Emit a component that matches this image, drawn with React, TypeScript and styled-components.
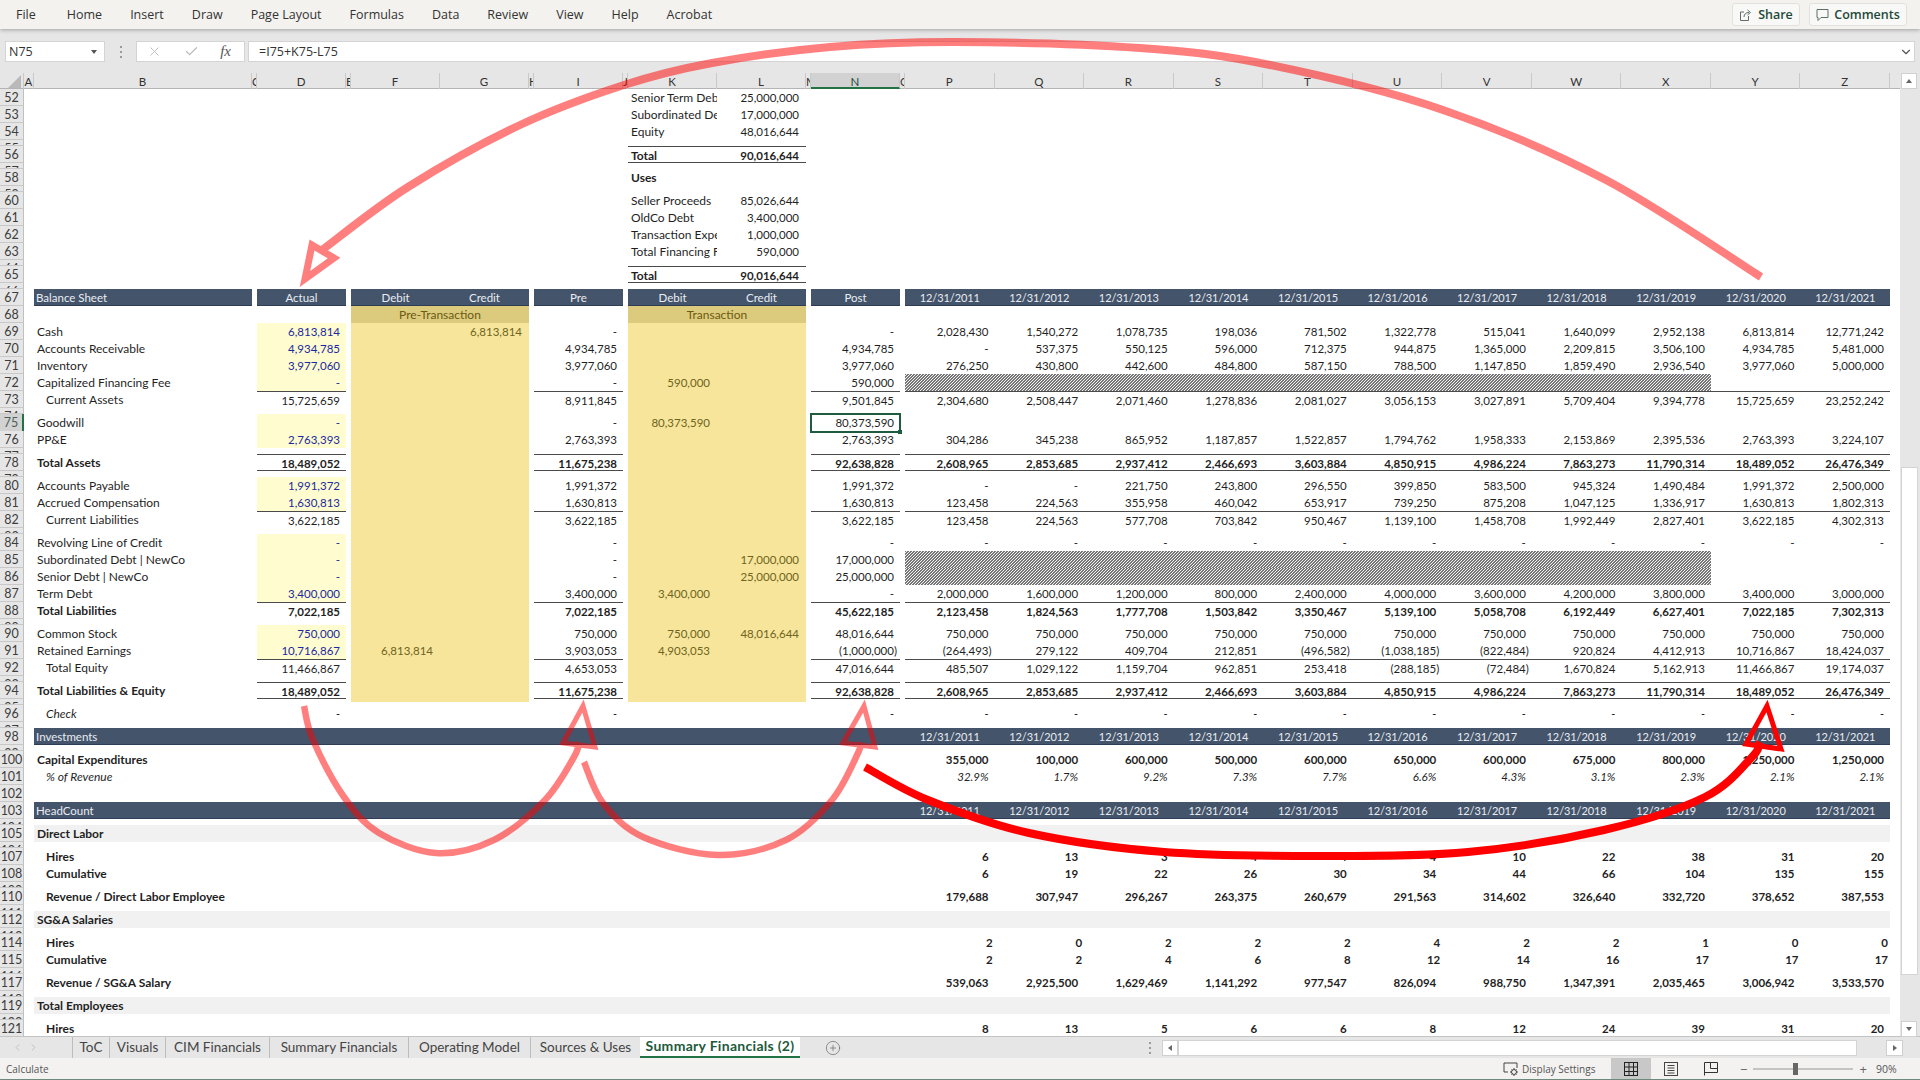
import React from "react";
import styled, { createGlobalStyle, css } from "styled-components";
import { X, Check, ChevronDown, CirclePlus, ChevronLeft, ChevronRight } from "lucide-react";

const Global = createGlobalStyle`
  html, body { margin: 0; padding: 0; background: #fff; overflow: hidden; }
  * { box-sizing: border-box; }
`;

const UI = `"Open Sans", "Liberation Sans", sans-serif`;
const SHEET = `Lato, "Liberation Sans", sans-serif`;
const TRACKS = `24px 10px 218px 5px 89px 5px 89px 89px 5px 89px 5px 89px 89px 5px 89px 5px repeat(11, 89.55px) 1fr`;

const Page = styled.div`
  position: relative;
  width: 1920px;
  height: 1080px;
  display: flex;
  flex-direction: column;
  overflow: hidden;
  font-family: ${SHEET};
  border-bottom: 1px solid #6d8a7c;
`;

/* ---------- menu ---------- */
const MenuBar = styled.div`
  position: relative;
  z-index: 2;
  height: 29px;
  flex: none;
  display: flex;
  align-items: center;
  padding: 0 13px 0 16px;
  background: #f3f2ef;
  box-shadow: 0 1px 4px rgba(0, 0, 0, 0.3);
  font: 12.5px ${UI};
  color: #333;
`;
const MenuItems = styled.div`
  display: flex;
  gap: 28px;
  & > :first-child {
    margin-right: 3px;
  }
`;
const MenuActions = styled.div`
  margin-left: auto;
  display: flex;
  gap: 9px;
`;
const ActionButton = styled.div<{ $w: number }>`
  width: ${(p) => p.$w}px;
  height: 23px;
  display: flex;
  align-items: center;
  justify-content: center;
  gap: 5px;
  background: #f8f8f6;
  border: 1px solid #e2e1dd;
  border-radius: 3px;
  font: 600 12.5px ${UI};
  color: #1f4a3a;
`;

/* ---------- formula ---------- */
const FormulaBar = styled.div`
  height: 44px;
  flex: none;
  display: flex;
  align-items: flex-start;
  padding: 12px 5px 0 5px;
  background: #e6e6e6;
`;
const NameBox = styled.div`
  width: 100px;
  height: 21px;
  display: flex;
  align-items: center;
  justify-content: space-between;
  padding: 0 7px 0 3px;
  background: #fff;
  border: 1px solid #d4d4d4;
  font: 12.5px ${UI};
  color: #333;
`;
const Caret = styled.span`
  width: 0;
  height: 0;
  border-left: 3.5px solid transparent;
  border-right: 3.5px solid transparent;
  border-top: 4px solid #555;
`;
const Grip = styled.div`
  width: 31px;
  height: 21px;
  display: flex;
  flex-direction: column;
  align-items: center;
  justify-content: center;
  gap: 3px;
  & > i {
    width: 2px;
    height: 2px;
    background: #9a9a9a;
  }
`;
const FormulaTools = styled.div`
  width: 109px;
  height: 21px;
  display: flex;
  align-items: center;
  justify-content: space-between;
  padding: 0 13px 0 10px;
  background: #fff;
  border: 1px solid #d4d4d4;
  color: #bbb;
`;
const Fx = styled.span`
  font: italic 15px "Liberation Serif", serif;
  color: #555;
`;
const FormulaInput = styled.div`
  flex: 1;
  height: 21px;
  margin-left: 3px;
  display: flex;
  align-items: center;
  justify-content: space-between;
  padding: 0 1px 0 10px;
  background: #fff;
  border: 1px solid #d4d4d4;
  font: 12.5px ${UI};
  color: #333;
`;

/* ---------- grid ---------- */
const ColumnHeader = styled.div`
  height: 16px;
  flex: none;
  display: grid;
  grid-template-columns: ${TRACKS};
  background: #e6e6e6;
  border-bottom: 1px solid #b4b4b4;
`;
const Corner = styled.div`
  position: relative;
  border-right: 1px solid #c8c8c8;
  &::after {
    content: "";
    position: absolute;
    right: 2px;
    bottom: 1px;
    width: 13px;
    height: 13px;
    background: #b9b9b9;
    clip-path: polygon(100% 0, 100% 100%, 0 100%);
  }
`;
const ColLetter = styled.div<{ $col: number; $active?: boolean }>`
  grid-column: ${(p) => p.$col};
  overflow: hidden;
  text-align: center;
  font-size: 11.5px;
  line-height: 17px;
  color: #333;
  border-right: 1px solid #c9c9c9;
  ${(p) =>
    p.$active &&
    css`
      background: #d2d2d2;
      color: #1d4d39;
      border-bottom: 2px solid #217346;
      height: 16px;
    `}
`;
const Middle = styled.div`
  flex: 1;
  min-height: 0;
  display: flex;
`;
const Rows = styled.div`
  flex: 1;
  min-width: 0;
  overflow: hidden;
  background: #fff;
`;
const SheetRow = styled.div<{ $thin?: boolean }>`
  display: grid;
  grid-template-columns: ${TRACKS};
  height: ${(p) => (p.$thin ? 6 : 17)}px;
  overflow: ${(p) => (p.$thin ? "hidden" : "visible")};
  font-size: 11.5px;
  line-height: 18px;
  color: #1f1f1f;
`;
const RowNum = styled.div<{ $active?: boolean }>`
  grid-column: 1;
  grid-row: 1;
  overflow: hidden;
  text-align: center;
  font-size: 12.5px;
  line-height: 18px;
  color: #3c3c3c;
  background: #e6e6e6;
  border-bottom: 1px solid #c8c8c8;
  border-right: 1px solid #c0c0c0;
  ${(p) =>
    p.$active &&
    css`
      background: #d2d2d2;
      color: #4d5f57;
      border-right: 2px solid #217346;
    `}
`;

const fills: Record<string, string> = {
  navy: "#44546a",
  input: "#fffccf",
  adj: "#f6e59b",
  adjHead: "#dccb7d",
  band: "#f1f1f1",
};
const tones: Record<string, string> = {
  blue: "#1a2aa0",
  olive: "#6f6420",
  white: "#e9edf3",
  dark: "#6b5a10",
};

const Cell = styled.div<{
  $col: number;
  $span?: number;
  $fill?: string;
  $tone?: string;
  $bold?: boolean;
  $italic?: boolean;
  $align?: string;
  $indent?: number;
  $pad?: number;
  $top?: boolean;
  $bottom?: boolean;
  $selected?: boolean;
  $peek?: boolean;
  $date?: boolean;
}>`
  grid-column: ${(p) => p.$col} / span ${(p) => p.$span ?? 1};
  grid-row: 1;
  position: relative;
  min-width: 0;
  overflow: ${(p) => (p.$selected ? "visible" : "hidden")};
  white-space: nowrap;
  text-align: ${(p) => p.$align ?? "right"};
  padding-left: ${(p) => p.$indent ?? 0}px;
  padding-right: ${(p) => p.$pad ?? 0}px;
  background: ${(p) => (p.$fill ? fills[p.$fill] : "transparent")};
  color: ${(p) => (p.$tone ? tones[p.$tone] : "inherit")};
  font-weight: ${(p) => (p.$bold ? 700 : 400)};
  font-style: ${(p) => (p.$italic ? "italic" : "normal")};
  ${(p) => p.$align && p.$fill !== "navy" && "font-size: 12px;"}
  ${(p) => p.$date && "font-size: 11px; letter-spacing: -0.1px;"}
  ${(p) => p.$peek && "height: 3px;"}
  ${(p) => p.$top && "border-top: 1px solid #4a4a4a; line-height: 17px;"}
  ${(p) => p.$bottom && "border-bottom: 1px solid #4a4a4a;"}
  ${(p) => p.$fill === "navy" && "border-bottom: 1px solid #2e3d55;"}
  ${(p) =>
    p.$selected &&
    css`
      z-index: 1;
      outline: 2px solid #1f5c3f;
      outline-offset: -1px;
      &::after {
        content: "";
        position: absolute;
        right: -2px;
        bottom: -2px;
        width: 4px;
        height: 4px;
        background: #1f5c3f;
      }
    `}
`;
const Hatch = styled.div<{ $col: number; $span: number }>`
  grid-column: ${(p) => p.$col} / span ${(p) => p.$span};
  grid-row: 1;
  background: repeating-linear-gradient(135deg, #777 0 0.85px, #f2f2f2 0.85px 2.1213px);
`;

/* ---------- scrollbars ---------- */
const VScroll = styled.div`
  width: 20px;
  flex: none;
  margin-top: -16px;
  position: relative;
  z-index: 1;
  display: flex;
  flex-direction: column;
  padding-right: 2px;
  background: #e6e6e6;
`;
const ScrollButton = styled.div<{ $size?: number }>`
  flex: none;
  height: 16px;
  width: ${(p) => p.$size ?? 16}px;
  margin-left: 1px;
  display: flex;
  align-items: center;
  justify-content: center;
  background: #fff;
  border: 1px solid #d0d0d0;
`;
const Arrow = styled.span<{ $dir: "up" | "down" | "left" | "right" }>`
  width: 0;
  height: 0;
  ${(p) =>
    p.$dir === "up" || p.$dir === "down"
      ? `border-left: 3.5px solid transparent; border-right: 3.5px solid transparent;
         border-${p.$dir === "up" ? "bottom" : "top"}: 4px solid #666;`
      : `border-top: 3.5px solid transparent; border-bottom: 3.5px solid transparent;
         border-${p.$dir === "left" ? "right" : "left"}: 4px solid #666;`}
`;
const VTrack = styled.div<{ $h: number }>`
  height: ${(p) => p.$h}px;
  flex: none;
`;
const VThumb = styled.div<{ $h: number }>`
  height: ${(p) => p.$h}px;
  flex: none;
  margin-left: 1px;
  background: #fff;
  border: 1px solid #d4d4d4;
`;

/* ---------- tabs ---------- */
const TabBar = styled.div`
  height: 22px;
  flex: none;
  display: flex;
  align-items: stretch;
  background: #e6e6e6;
  border-top: 1px solid #c4c4c4;
  font: 13.5px ${SHEET};
  color: #444;
`;
const TabNav = styled.div`
  width: 72px;
  display: flex;
  align-items: center;
  gap: 5px;
  padding-left: 12px;
  color: #bdbdbd;
`;
const Tab = styled.div<{ $w: number; $active?: boolean }>`
  width: ${(p) => p.$w}px;
  display: flex;
  align-items: center;
  justify-content: center;
  padding-bottom: 2px;
  white-space: nowrap;
  border-left: 1px solid #bdbdbd;
  ${(p) =>
    p.$active &&
    css`
      background: #fff;
      color: #1d5a3c;
      font-size: 14px;
      font-weight: 700;
      letter-spacing: 0.3px;
      border-bottom: 2px solid #217346;
      border-left: none;
    `}
`;
const AddTab = styled.div`
  margin-left: 25px;
  display: flex;
  align-items: center;
  color: #777;
`;
const HScroll = styled.div`
  margin-left: auto;
  width: 776px;
  padding-right: 17px;
  display: flex;
  align-items: center;
`;
const HDots = styled.div`
  width: 12px;
  margin-right: 5px;
  display: flex;
  flex-direction: column;
  align-items: center;
  gap: 3px;
  & > i {
    width: 2px;
    height: 2px;
    background: #9a9a9a;
  }
`;
const HThumb = styled.div`
  width: 679px;
  height: 16px;
  background: #fff;
  border: 1px solid #d4d4d4;
`;
const HTrack = styled.div`
  width: 28px;
`;

/* ---------- status ---------- */
const StatusBar = styled.div`
  height: 21px;
  flex: none;
  display: flex;
  align-items: stretch;
  padding-left: 6px;
  background: #f3f2f0;
  font: 10px ${UI};
  color: #555;
`;
const StatusText = styled.div`
  display: flex;
  align-items: center;
`;
const StatusRight = styled.div`
  margin-left: auto;
  display: flex;
  align-items: stretch;
`;
const DisplaySettings = styled.div`
  width: 108px;
  display: flex;
  align-items: center;
  gap: 2px;
`;
const ViewButton = styled.div<{ $active?: boolean }>`
  width: 40px;
  display: flex;
  align-items: center;
  justify-content: center;
  background: ${(p) => (p.$active ? "#c8c8c8" : "transparent")};
`;
const ZoomSlider = styled.div`
  width: 145px;
  padding-left: 9px;
  display: flex;
  align-items: center;
  gap: 6px;
  color: #666;
  font-size: 13px;
`;
const SliderTrack = styled.div`
  position: relative;
  width: 100px;
  height: 2px;
  background: #c4c4c4;
`;
const SliderKnob = styled.div`
  position: absolute;
  left: 40px;
  top: -5px;
  width: 5px;
  height: 12px;
  background: #666;
`;
const ZoomPct = styled.div`
  width: 44px;
  font-size: 10.5px;
  display: flex;
  align-items: center;
`;

const Overlay = styled.svg`
  position: absolute;
  left: 0;
  top: 0;
  z-index: 5;
  pointer-events: none;
`;

/* ---------- data ---------- */
type Spec = React.ComponentProps<typeof Cell> & { text?: string };
type RowSpec = { n: number; thin?: boolean; cells: Spec[]; hatch?: boolean };

const P0 = 17;
const dates = Array.from({ length: 11 }, (_, i) => `12/31/${2011 + i}`);

const list = (s: string) => s.trim().split(/\s+/);

type LineOpts = {
  D?: string;
  F?: string;
  G?: string;
  I?: string;
  K?: string;
  L?: string;
  N?: string;
  P?: string;
  input?: boolean;
  selectN?: boolean;
  hatch?: boolean;
  top?: boolean;
  bottom?: boolean;
  bold?: boolean;
  indent?: boolean;
  italic?: boolean;
  pad?: number;
};

const pad = (text?: string, base = 6) => (text && text.endsWith(")") ? 3 : base);

function line(n: number, label: string, o: LineOpts): RowSpec {
  const base = { $bold: o.bold, $italic: o.italic };
  const num = (col: number, text?: string, extra: Partial<Spec> = {}): Spec => ({
    $col: col,
    text,
    $pad: pad(text, o.pad ?? 6),
    $top: o.top,
    $bottom: o.bottom,
    ...base,
    ...extra,
  });
  const cells: Spec[] = [{ $col: 3, text: label, $align: "left", $indent: o.indent ? 12 : 3, ...base }];
  if (n >= 69 && n <= 94) {
    cells.push(
      { $col: 7, text: o.F, $fill: "adj", $tone: "olive", $pad: 7 },
      { $col: 8, text: o.G, $fill: "adj", $tone: "olive", $pad: 7 },
      { $col: 12, text: o.K, $fill: "adj", $tone: "olive", $pad: 7 },
      { $col: 13, text: o.L, $fill: "adj", $tone: "olive", $pad: 7 }
    );
  }
  if (o.D !== undefined) cells.push(num(5, o.D, o.input ? { $fill: "input", $tone: "blue" } : {}));
  if (o.I !== undefined) cells.push(num(10, o.I));
  if (o.N !== undefined) cells.push(num(15, o.N, { $selected: o.selectN }));
  if (o.P) list(o.P).forEach((v, i) => cells.push(num(P0 + i, v)));
  return { n, cells, hatch: o.hatch };
}

const thin = (n: number, adj = false): RowSpec => ({
  n,
  thin: true,
  cells: adj
    ? [
        { $col: 7, $span: 2, $fill: "adj" },
        { $col: 12, $span: 2, $fill: "adj" },
      ]
    : [],
});

const blank = (n: number): RowSpec => ({ n, cells: [] });

const su = (n: number, label: string, value: string, bold = false, lines = false): RowSpec => ({
  n,
  cells: [
    { $col: 12, text: label, $align: "left", $indent: 3, $bold: bold, $top: lines, $bottom: lines },
    { $col: 13, text: value, $pad: 7, $bold: bold, $top: lines, $bottom: lines },
  ],
});

const navyBand = (n: number, label: string): RowSpec => ({
  n,
  cells: [
    { $col: 3, $span: 14, text: label, $fill: "navy", $tone: "white", $align: "left", $indent: 2 },
    ...dates.map((d, i) => ({ $col: P0 + i, text: d, $fill: "navy", $tone: "white", $align: "center", $date: true })),
  ],
});
const greyBand = (n: number, label: string): RowSpec => ({
  n,
  cells: [{ $col: 3, $span: 25, text: label, $fill: "band", $align: "left", $indent: 3, $bold: true }],
});

const head = (col: number, text: string, align = "center"): Spec => ({
  $col: col,
  text,
  $fill: "navy",
  $tone: "white",
  $align: align,
  $indent: align === "left" ? 2 : 0,
});

const rows: RowSpec[] = [
  su(52, "Senior Term Debt", "25,000,000"),
  su(53, "Subordinated Debt", "17,000,000"),
  su(54, "Equity", "48,016,644"),
  thin(55),
  su(56, "Total", "90,016,644", true, true),
  thin(57),
  { n: 58, cells: [{ $col: 12, text: "Uses", $align: "left", $indent: 3, $bold: true }] },
  thin(59),
  su(60, "Seller Proceeds", "85,026,644"),
  su(61, "OldCo Debt", "3,400,000"),
  su(62, "Transaction Expenses", "1,000,000"),
  su(63, "Total Financing Fee", "590,000"),
  thin(64),
  su(65, "Total", "90,016,644", true, true),
  thin(66),
  {
    n: 67,
    cells: [
      head(3, "Balance Sheet", "left"),
      head(5, "Actual"),
      head(7, "Debit"),
      head(8, "Credit"),
      head(10, "Pre"),
      head(12, "Debit"),
      head(13, "Credit"),
      head(15, "Post"),
      ...dates.map((d, i) => ({ ...head(P0 + i, d), $date: true })),
    ],
  },
  {
    n: 68,
    cells: [
      { $col: 7, $span: 2, text: "Pre-Transaction", $fill: "adjHead", $tone: "dark", $align: "center" },
      { $col: 12, $span: 2, text: "Transaction", $fill: "adjHead", $tone: "dark", $align: "center" },
    ],
  },
  line(69, "Cash", { input: true, D: "6,813,814", G: "6,813,814", I: "-", N: "-", P: "2,028,430 1,540,272 1,078,735 198,036 781,502 1,322,778 515,041 1,640,099 2,952,138 6,813,814 12,771,242" }),
  line(70, "Accounts Receivable", { input: true, D: "4,934,785", I: "4,934,785", N: "4,934,785", P: "- 537,375 550,125 596,000 712,375 944,875 1,365,000 2,209,815 3,506,100 4,934,785 5,481,000" }),
  line(71, "Inventory", { input: true, D: "3,977,060", I: "3,977,060", N: "3,977,060", P: "276,250 430,800 442,600 484,800 587,150 788,500 1,147,850 1,859,490 2,936,540 3,977,060 5,000,000" }),
  line(72, "Capitalized Financing Fee", { input: true, D: "-", I: "-", K: "590,000", N: "590,000", hatch: true }),
  line(73, "Current Assets", { indent: true, top: true, D: "15,725,659", I: "8,911,845", N: "9,501,845", P: "2,304,680 2,508,447 2,071,460 1,278,836 2,081,027 3,056,153 3,027,891 5,709,404 9,394,778 15,725,659 23,252,242" }),
  thin(74, true),
  line(75, "Goodwill", { input: true, D: "-", I: "-", K: "80,373,590", N: "80,373,590", selectN: true }),
  line(76, "PP&E", { input: true, D: "2,763,393", I: "2,763,393", N: "2,763,393", P: "304,286 345,238 865,952 1,187,857 1,522,857 1,794,762 1,958,333 2,153,869 2,395,536 2,763,393 3,224,107" }),
  thin(77, true),
  line(78, "Total Assets", { bold: true, top: true, bottom: true, D: "18,489,052", I: "11,675,238", N: "92,638,828", P: "2,608,965 2,853,685 2,937,412 2,466,693 3,603,884 4,850,915 4,986,224 7,863,273 11,790,314 18,489,052 26,476,349" }),
  thin(79, true),
  line(80, "Accounts Payable", { input: true, D: "1,991,372", I: "1,991,372", N: "1,991,372", P: "- - 221,750 243,800 296,550 399,850 583,500 945,324 1,490,484 1,991,372 2,500,000" }),
  line(81, "Accrued Compensation", { input: true, D: "1,630,813", I: "1,630,813", N: "1,630,813", P: "123,458 224,563 355,958 460,042 653,917 739,250 875,208 1,047,125 1,336,917 1,630,813 1,802,313" }),
  line(82, "Current Liabilities", { indent: true, top: true, D: "3,622,185", I: "3,622,185", N: "3,622,185", P: "123,458 224,563 577,708 703,842 950,467 1,139,100 1,458,708 1,992,449 2,827,401 3,622,185 4,302,313" }),
  thin(83, true),
  line(84, "Revolving Line of Credit", { input: true, D: "-", I: "-", N: "-", P: "- - - - - - - - - - -" }),
  line(85, "Subordinated Debt | NewCo", { input: true, D: "-", I: "-", L: "17,000,000", N: "17,000,000", hatch: true }),
  line(86, "Senior Debt | NewCo", { input: true, D: "-", I: "-", L: "25,000,000", N: "25,000,000", hatch: true }),
  line(87, "Term Debt", { input: true, D: "3,400,000", I: "3,400,000", K: "3,400,000", N: "-", P: "2,000,000 1,600,000 1,200,000 800,000 2,400,000 4,000,000 3,600,000 4,200,000 3,800,000 3,400,000 3,000,000" }),
  line(88, "Total Liabilities", { bold: true, top: true, D: "7,022,185", I: "7,022,185", N: "45,622,185", P: "2,123,458 1,824,563 1,777,708 1,503,842 3,350,467 5,139,100 5,058,708 6,192,449 6,627,401 7,022,185 7,302,313" }),
  thin(89, true),
  line(90, "Common Stock", { input: true, D: "750,000", I: "750,000", K: "750,000", L: "48,016,644", N: "48,016,644", P: "750,000 750,000 750,000 750,000 750,000 750,000 750,000 750,000 750,000 750,000 750,000" }),
  line(91, "Retained Earnings", { input: true, D: "10,716,867", F: "6,813,814", I: "3,903,053", K: "4,903,053", N: "(1,000,000)", P: "(264,493) 279,122 409,704 212,851 (496,582) (1,038,185) (822,484) 920,824 4,412,913 10,716,867 18,424,037" }),
  line(92, "Total Equity", { indent: true, top: true, D: "11,466,867", I: "4,653,053", N: "47,016,644", P: "485,507 1,029,122 1,159,704 962,851 253,418 (288,185) (72,484) 1,670,824 5,162,913 11,466,867 19,174,037" }),
  thin(93, true),
  line(94, "Total Liabilities & Equity", { bold: true, top: true, bottom: true, D: "18,489,052", I: "11,675,238", N: "92,638,828", P: "2,608,965 2,853,685 2,937,412 2,466,693 3,603,884 4,850,915 4,986,224 7,863,273 11,790,314 18,489,052 26,476,349" }),
  {
    n: 95,
    thin: true,
    cells: [
      { $col: 7, $span: 2, $fill: "adj", $peek: true },
      { $col: 12, $span: 2, $fill: "adj", $peek: true },
    ],
  },
  line(96, "Check", { italic: true, indent: true, D: "-", I: "-", N: "-", P: "- - - - - - - - - - -" }),
  thin(97),
  navyBand(98, "Investments"),
  thin(99),
  line(100, "Capital Expenditures", { bold: true, P: "355,000 100,000 600,000 500,000 600,000 650,000 600,000 675,000 800,000 1,250,000 1,250,000" }),
  line(101, "% of Revenue", { italic: true, indent: true, P: "32.9% 1.7% 9.2% 7.3% 7.7% 6.6% 4.3% 3.1% 2.3% 2.1% 2.1%" }),
  blank(102),
  navyBand(103, "HeadCount"),
  thin(104),
  greyBand(105, "Direct Labor"),
  thin(106),
  line(107, "Hires", { bold: true, indent: true, P: "6 13 3 4 4 4 10 22 38 31 20" }),
  line(108, "Cumulative", { bold: true, indent: true, P: "6 19 22 26 30 34 44 66 104 135 155" }),
  thin(109),
  line(110, "Revenue / Direct Labor Employee", { bold: true, indent: true, P: "179,688 307,947 296,267 263,375 260,679 291,563 314,602 326,640 332,720 378,652 387,553" }),
  thin(111),
  greyBand(112, "SG&A Salaries"),
  thin(113),
  line(114, "Hires", { bold: true, indent: true, pad: 2, P: "2 0 2 2 2 4 2 2 1 0 0" }),
  line(115, "Cumulative", { bold: true, indent: true, pad: 2, P: "2 2 4 6 8 12 14 16 17 17 17" }),
  thin(116),
  line(117, "Revenue / SG&A Salary", { bold: true, indent: true, P: "539,063 2,925,500 1,629,469 1,141,292 977,547 826,094 988,750 1,347,391 2,035,465 3,006,942 3,533,570" }),
  thin(118),
  greyBand(119, "Total Employees"),
  thin(120),
  line(121, "Hires", { bold: true, indent: true, P: "8 13 5 6 6 8 12 24 39 31 20" }),
];

const hatchSpan = 9;

const letters = "A B C D E F G H I J K L M N O P Q R S T U V W X Y Z".split(" ");

const tabs: [string, number, boolean?][] = [
  ["ToC", 37],
  ["Visuals", 56],
  ["CIM Financials", 104],
  ["Summary Financials", 139],
  ["Operating Model", 122],
  ["Sources & Uses", 110],
  ["Summary Financials (2)", 160, true],
];

/* ---------- arrows ---------- */
type Pt = [number, number];
function smooth(pts: Pt[]): string {
  let d = `M${pts[0][0]} ${pts[0][1]}`;
  for (let i = 0; i < pts.length - 1; i++) {
    const p0 = pts[Math.max(0, i - 1)];
    const p1 = pts[i];
    const p2 = pts[i + 1];
    const p3 = pts[Math.min(pts.length - 1, i + 2)];
    const c1 = [p1[0] + (p2[0] - p0[0]) / 6, p1[1] + (p2[1] - p0[1]) / 6];
    const c2 = [p2[0] - (p3[0] - p1[0]) / 6, p2[1] - (p3[1] - p1[1]) / 6];
    d += ` C${c1[0].toFixed(1)} ${c1[1].toFixed(1)} ${c2[0].toFixed(1)} ${c2[1].toFixed(1)} ${p2[0]} ${p2[1]}`;
  }
  return d;
}
const tri = (p: Pt[]) => p.map((q) => q.join(",")).join(" ");

const arcTop: Pt[] = [[1761, 277], [1606, 180], [1443, 110], [1270, 65], [1140, 48], [957, 42], [830, 47], [712, 63], [624, 85], [520, 125], [408, 187], [322, 250]];
const arcA: Pt[] = [[304, 706], [313, 740], [344, 797], [379, 833], [436, 853], [494, 840], [545, 800], [574, 757], [579, 742]];
const arcB: Pt[] = [[584, 762], [603, 803], [643, 837], [718, 855], [786, 840], [832, 800], [858, 753], [860, 742]];
const arcC: Pt[] = [[865, 767], [928, 800], [1029, 833], [1164, 852], [1320, 856], [1468, 852], [1604, 830], [1705, 797], [1752, 757], [1760, 742]];

function Arrows() {
  return (
    <Overlay width={1920} height={1080} viewBox="0 0 1920 1080" fill="none">
      <g opacity={0.5} stroke="#ff0000">
        <path d={smooth(arcTop)} strokeWidth={8} />
        <polygon points={tri([[305, 279], [312, 245], [334, 258]])} strokeWidth={7} />
      </g>
      <g opacity={0.5} stroke="#ff0000">
        <path d={smooth(arcA)} strokeWidth={6.5} />
        <polygon points={tri([[583, 706], [563, 743], [595, 747]])} strokeWidth={5} />
      </g>
      <g opacity={0.5} stroke="#ff0000">
        <path d={smooth(arcB)} strokeWidth={6.5} />
        <polygon points={tri([[864, 706], [843, 743], [875, 747]])} strokeWidth={5} />
      </g>
      <g stroke="#ff0000">
        <path d={smooth(arcC)} strokeWidth={8} />
        <polygon points={tri([[1767, 706], [1746, 744], [1781, 749]])} strokeWidth={5} />
      </g>
    </Overlay>
  );
}

const ShareIcon = () => (
  <svg width="14" height="14" viewBox="0 0 14 14" fill="none" stroke="#5f6f68" strokeWidth="1">
    <path d="M5 4H1.5v8.5h8V8" />
    <path d="M5 9c0-3 2-4.5 5-4.5M8.5 2l3 2.5-3 2.5" />
  </svg>
);
const CommentIcon = () => (
  <svg width="13" height="14" viewBox="0 0 13 14" fill="none" stroke="#5f6f68" strokeWidth="1">
    <path d="M1 1.5h11v8H5l-3 3v-3H1z" />
  </svg>
);
const DisplayIcon = () => (
  <svg width="17" height="16" viewBox="0 0 17 16" fill="none" stroke="#444" strokeWidth="1">
    <path d="M5 11H1V2h13v5" />
    <circle cx="11" cy="11" r="2.5" />
    <path d="M11 7v1.500M11 13.500V15M7 11h1.500M13.500 11H15M8.500 8.500l1 1M12.500 12.500l1 1M13.500 8.500l-1 1M9.500 12.500l-1 1" />
  </svg>
);
const GridIcon = () => (
  <svg width="14" height="14" viewBox="0 0 14 14" fill="none" stroke="#222" strokeWidth="1">
    <rect x="0.5" y="0.5" width="13" height="13" />
    <path d="M5 .5v13M9.500 .5v13M.5 5h13M.5 9.500h13" />
  </svg>
);
const LayoutIcon = () => (
  <svg width="14" height="14" viewBox="0 0 14 14" fill="none" stroke="#444" strokeWidth="1">
    <rect x="0.5" y="0.5" width="13" height="13" />
    <path d="M3.500 3.500h7M3.500 6h7M3.500 8.500h7M3.500 11h7" />
  </svg>
);
const BreakIcon = () => (
  <svg width="14" height="14" viewBox="0 0 14 14" fill="none" stroke="#333" strokeWidth="1">
    <path d="M.5 13.500V.5h13v10h-13M6.500 .5v6h7" />
  </svg>
);

export default function App() {
  return (
    <Page>
      <Global />
      <MenuBar>
        <MenuItems>
          {["File", "Home", "Insert", "Draw", "Page Layout", "Formulas", "Data", "Review", "View", "Help", "Acrobat"].map((m) => (
            <span key={m}>{m}</span>
          ))}
        </MenuItems>
        <MenuActions>
          <ActionButton $w={68}>
            <ShareIcon />
            Share
          </ActionButton>
          <ActionButton $w={98}>
            <CommentIcon />
            Comments
          </ActionButton>
        </MenuActions>
      </MenuBar>
      <FormulaBar>
        <NameBox>
          N75
          <Caret />
        </NameBox>
        <Grip>
          <i />
          <i />
          <i />
        </Grip>
        <FormulaTools>
          <X size={15} strokeWidth={1.5} />
          <Check size={15} strokeWidth={2} />
          <Fx>fx</Fx>
        </FormulaTools>
        <FormulaInput>
          =I75+K75-L75
          <ChevronDown size={14} color="#555" />
        </FormulaInput>
      </FormulaBar>
      <ColumnHeader>
        <Corner />
        {letters.map((l, i) => (
          <ColLetter key={l} $col={i + 2} $active={l === "N"}>
            {l}
          </ColLetter>
        ))}
      </ColumnHeader>
      <Middle>
        <Rows>
          {rows.map((r) => (
            <SheetRow key={r.n} $thin={r.thin}>
              <RowNum $active={r.n === 75}>{r.n}</RowNum>
              {r.cells.map(({ text, ...c }, i) => (
                <Cell key={i} {...(c as object)} $col={c.$col}>
                  {text}
                </Cell>
              ))}
              {r.hatch && <Hatch $col={P0} $span={hatchSpan} />}
            </SheetRow>
          ))}
        </Rows>
        <VScroll>
          <ScrollButton>
            <Arrow $dir="up" />
          </ScrollButton>
          <VTrack $h={378} />
          <VThumb $h={508} />
          <VTrack $h={46} />
          <ScrollButton>
            <Arrow $dir="down" />
          </ScrollButton>
        </VScroll>
      </Middle>
      <TabBar>
        <TabNav>
          <ChevronLeft size={11} />
          <ChevronRight size={11} />
        </TabNav>
        {tabs.map(([t, w, active]) => (
          <Tab key={t} $w={w} $active={active}>
            {t}
          </Tab>
        ))}
        <AddTab>
          <CirclePlus size={16} strokeWidth={1.2} />
        </AddTab>
        <HScroll>
          <HDots>
            <i />
            <i />
            <i />
          </HDots>
          <ScrollButton $size={16}>
            <Arrow $dir="left" />
          </ScrollButton>
          <HThumb />
          <HTrack />
          <ScrollButton $size={17}>
            <Arrow $dir="right" />
          </ScrollButton>
        </HScroll>
      </TabBar>
      <StatusBar>
        <StatusText>Calculate</StatusText>
        <StatusRight>
          <DisplaySettings>
            <DisplayIcon />
            Display Settings
          </DisplaySettings>
          <ViewButton $active>
            <GridIcon />
          </ViewButton>
          <ViewButton>
            <LayoutIcon />
          </ViewButton>
          <ViewButton>
            <BreakIcon />
          </ViewButton>
          <ZoomSlider>
            −
            <SliderTrack>
              <SliderKnob />
            </SliderTrack>
            +
          </ZoomSlider>
          <ZoomPct>90%</ZoomPct>
        </StatusRight>
      </StatusBar>
      <Arrows />
    </Page>
  );
}
